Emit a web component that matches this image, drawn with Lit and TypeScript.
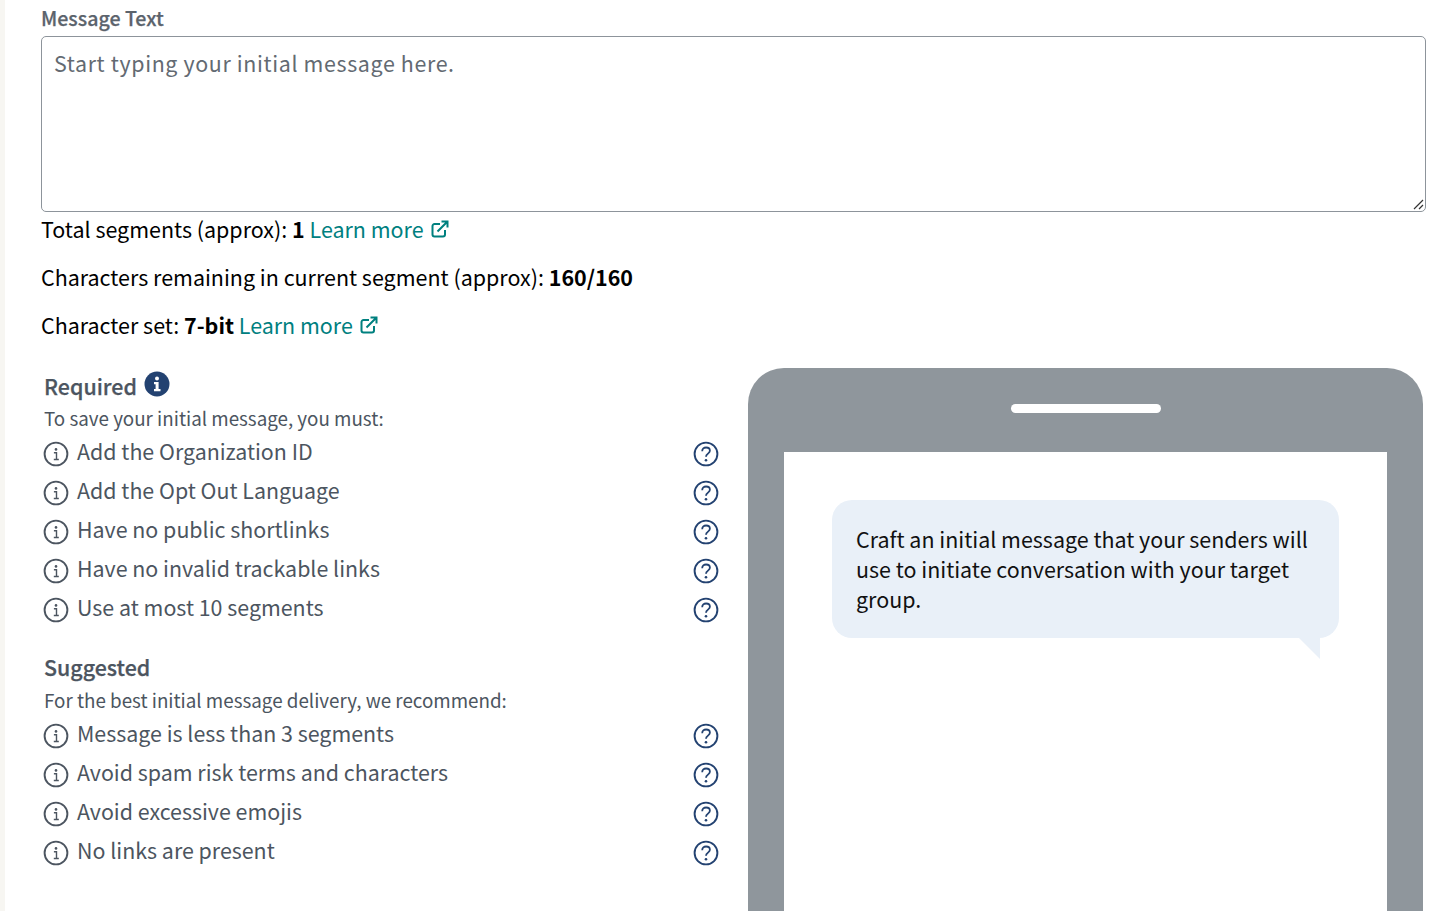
import { LitElement, html, css } from "lit";
import { customElement } from "lit/decorators.js";

const info = html`<svg class="ico info" viewBox="0 0 26 26"><circle cx="13" cy="13" r="11.4" fill="none" stroke="#4c5560" stroke-width="1.9"/><circle cx="13" cy="8.4" r="1.3" fill="#4c5560"/><path d="M10.9 11.8h2.6v6.4M10.8 18.5h5" fill="none" stroke="#4c5560" stroke-width="1.4"/></svg>`;
const help = html`<svg class="ico" viewBox="0 0 26 26"><circle cx="13" cy="13" r="11.4" fill="none" stroke="#234271" stroke-width="1.9"/><path d="M9.2 10.2c0-2.4 1.7-3.7 3.9-3.7s3.8 1.4 3.8 3.3c0 2.9-3.9 2.8-3.9 5.9" fill="none" stroke="#234271" stroke-width="1.8"/><circle cx="13" cy="19.2" r="1.3" fill="#234271"/></svg>`;
const ext = html`<svg class="ext" viewBox="0 0 18 18"><path d="M14 10v4.5a2 2 0 0 1-2 2H3.5a2 2 0 0 1-2-2V6a2 2 0 0 1 2-2H9" fill="none" stroke="currentColor" stroke-width="2"/><path d="M6.5 11.5 16 2M10.5 1.5h6v6" fill="none" stroke="currentColor" stroke-width="2"/></svg>`;

@customElement("app-root")
export class AppRoot extends LitElement {
  static styles = css`
    :host { display: block; height: 911px; overflow: hidden; background: #f7f6f2; font-family: "Noto Sans CJK JP", "Noto Sans", sans-serif; color: #000; }
    .page { background: #fff; margin-left: 5px; padding: 6px 11px 0 36px; height: 911px; box-sizing: border-box; }
    .label { font-size: 19.6px; font-weight: 500; -webkit-text-stroke: .25px #5b636c; line-height: 24px; color: #5b636c; height: 30px; }
    .area { height: 176px; border: 1px solid #8d949b; border-radius: 5px; box-sizing: border-box; padding: 9px 12px; font-size: 21.4px; letter-spacing: .64px; line-height: 34px; color: #636a72; position: relative; }
    .grip { position: absolute; right: 1px; bottom: 1px; width: 12px; height: 12px; }
    .line { font-size: 21.46px; line-height: 36px; height: 36px; margin-top: -1px; white-space: nowrap; }
    .line + .line { margin-top: 12px; }
    b { font-weight: 700; }
    a { color: #00807f; display: inline-flex; align-items: center; gap: 7px; }
    .ext { width: 18px; height: 18px; }
    .cols { display: flex; margin-top: 25px; }
    .left { width: 675px; padding-left: 3px; flex: none; }
    .h { font-size: 21.4px; font-weight: 500; -webkit-text-stroke: .25px #4c5560; color: #4c5560; line-height: 34px; padding-top: 1px; display: flex; align-items: center; gap: 7px; }
    .badge { width: 26px; height: 26px; margin-top: -5px; }
    .sub { font-size: 18.8px; color: #4c5560; line-height: 30px; margin-bottom: 1px; }
    .sub2 { margin-top: 1px; margin-bottom: 1px; }
    .row { display: flex; align-items: center; height: 39px; font-size: 21.4px; color: #4c5560; gap: 8px; }
    .row span { flex: 1; padding-bottom: 6px; }
    .ico { width: 26px; height: 26px; flex: none; }
    .info { margin-left: -1px; }
    .group2 { margin-top: 20px; }
    .phone { margin-left: 29px; width: 675px; height: 560px; background: #8f969c; border-radius: 36px 36px 0 0; padding-top: 84px; box-sizing: border-box; position: relative; }
    .notch { position: absolute; left: 263px; top: 36px; width: 150px; height: 9px; border-radius: 5px; background: #fff; }
    .screen { margin: 0 36px; background: #fff; height: 100%; padding: 48px; box-sizing: border-box; }
    .bubble { position: relative; background: #e9f0f8; border-radius: 20px; padding: 24px; font-size: 21.45px; line-height: 30px; color: #111; height: 138px; box-sizing: border-box; }
    .tail { position: absolute; right: 19px; bottom: -21px; width: 21px; height: 21px; }
  `;
  reqs = ["Add the Organization ID", "Add the Opt Out Language", "Have no public shortlinks", "Have no invalid trackable links", "Use at most 10 segments"];
  sugg = ["Message is less than 3 segments", "Avoid spam risk terms and characters", "Avoid excessive emojis", "No links are present"];
  row(t: string) { return html`<div class="row">${info}<span>${t}</span>${help}</div>`; }
  render() {
    return html`<div class="page">
      <div class="label">Message Text</div>
      <div class="area">Start typing your initial message here.
        <svg class="grip" viewBox="0 0 12 12"><path d="M2 11 11 2M7 11l4-4" stroke="#333" stroke-width="1.2"/></svg>
      </div>
      <div class="line">Total segments (approx): <b>1</b> <a>Learn more ${ext}</a></div>
      <div class="line">Characters remaining in current segment (approx): <b>160/160</b></div>
      <div class="line">Character set: <b>7-bit</b> <a>Learn more ${ext}</a></div>
      <div class="cols">
        <div class="left">
          <div class="h">Required <svg class="badge" viewBox="0 0 26 26"><circle cx="13" cy="13" r="12.5" fill="#234271"/><circle cx="13" cy="7.6" r="2" fill="#fff"/><path d="M10 11h4.6v7H16.5v2.2h-6.5V18h1.6v-4.8H10z" fill="#fff"/></svg></div>
          <div class="sub">To save your initial message, you must:</div>
          ${this.reqs.map((t) => this.row(t))}
          <div class="h group2">Suggested</div>
          <div class="sub sub2">For the best initial message delivery, we recommend:</div>
          ${this.sugg.map((t) => this.row(t))}
        </div>
        <div class="phone"><div class="notch"></div>
          <div class="screen"><div class="bubble">Craft an initial message that your senders will use to initiate conversation with your target group.
            <svg class="tail" viewBox="0 0 20 20"><path d="M0 0H20V20Z" fill="#e9f0f8"/></svg></div></div>
        </div>
      </div>
    </div>`;
  }
}
